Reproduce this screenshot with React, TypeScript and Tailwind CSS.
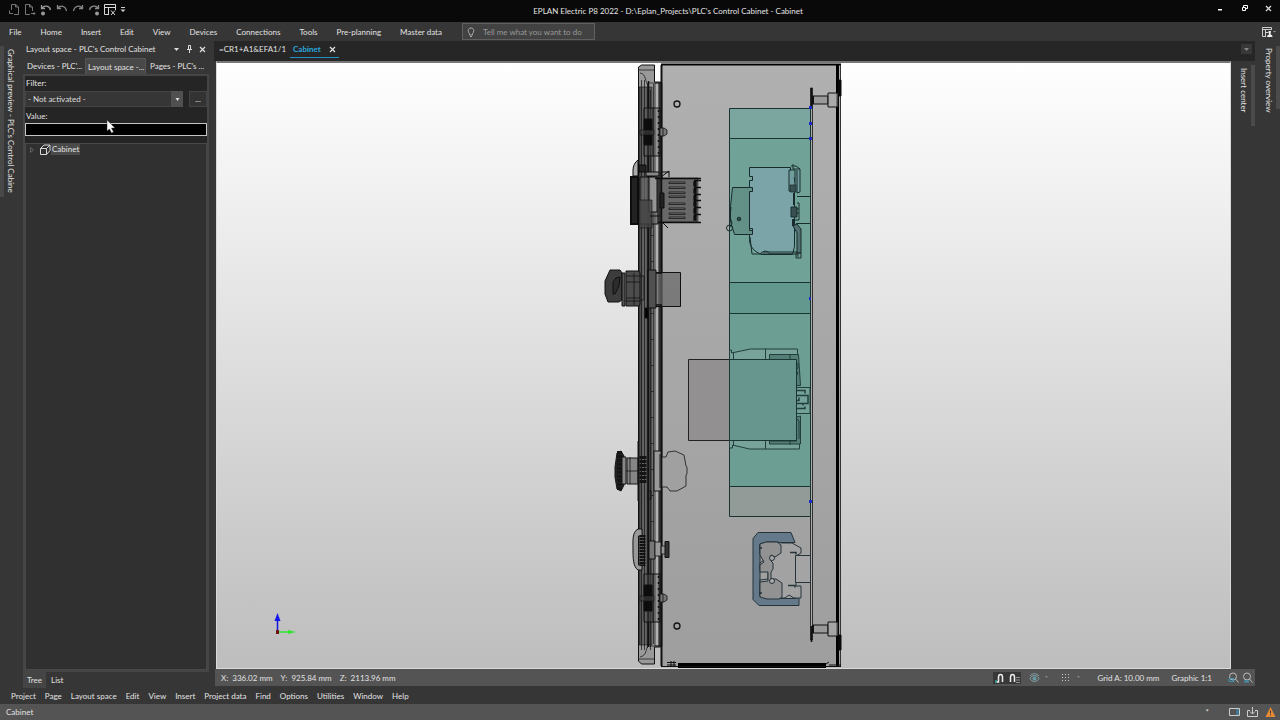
import type { ReactNode } from "react";

const ribbonTabs = [
  "File",
  "Home",
  "Insert",
  "Edit",
  "View",
  "Devices",
  "Connections",
  "Tools",
  "Pre-planning",
  "Master data",
];

const menuItems = [
  "Project",
  "Page",
  "Layout space",
  "Edit",
  "View",
  "Insert",
  "Project data",
  "Find",
  "Options",
  "Utilities",
  "Window",
  "Help",
];

function IconButton({ label, children, className = "" }: { label: string; children: ReactNode; className?: string }) {
  return (
    <button aria-label={label} className={`flex shrink-0 items-center justify-center ${className}`}>
      {children}
    </button>
  );
}

function CloseIcon() {
  return (
    <svg width="7" height="7" viewBox="0 0 7 7" stroke="#e0e0e0" strokeWidth="1.2">
      <path d="M1 1l5 5M6 1L1 6" />
    </svg>
  );
}

function TitleBar() {
  return (
    <header className="flex h-[22px] shrink-0 items-center bg-[#090909]">
      <div className="flex flex-1 items-center gap-1 pb-[2px] pl-2">
        <IconButton label="Previous page">
          <svg width="12" height="12" viewBox="0 0 12 12" fill="none" stroke="#777" strokeWidth="1">
            <path d="M3.500 6V.5h4L10.500 3v7.500H6M7.500 .5V3h3M5 9.500H1.500v-3" />
          </svg>
        </IconButton>
        <IconButton label="Next page">
          <svg width="12" height="12" viewBox="0 0 12 12" fill="none" stroke="#777" strokeWidth="1">
            <path d="M6 10.500H1.500V.5h4L8.500 3v4M5.500 .5V3h3M7 9.500h4M9.500 8L11 9.500 9.500 11" />
          </svg>
        </IconButton>
        <IconButton label="Undo list">
          <svg width="12" height="12" viewBox="0 0 12 12" fill="none" stroke="#999" strokeWidth="1.300">
            <path d="M1.500 1v3.500H5M1.800 4.300C4 1 9.500 1.500 10.500 6" />
            <circle cx="3" cy="9.500" r="2" fill="#999" stroke="none" />
          </svg>
        </IconButton>
        <IconButton label="Undo">
          <svg width="12" height="12" viewBox="0 0 12 12" fill="none" stroke="#888" strokeWidth="1.300">
            <path d="M1.500 1v3.500H5M1.800 4.300C4 1 9.500 1.500 10.500 7" />
          </svg>
        </IconButton>
        <IconButton label="Redo">
          <svg width="12" height="12" viewBox="0 0 12 12" fill="none" stroke="#888" strokeWidth="1.300">
            <path d="M10.500 1v3.500H7M10.200 4.300C8 1 2.500 1.500 1.500 7" />
          </svg>
        </IconButton>
        <IconButton label="Redo list">
          <svg width="12" height="12" viewBox="0 0 12 12" fill="none" stroke="#888" strokeWidth="1.300">
            <path d="M10.500 1v3.500H7M10.200 4.300C8 1 2.500 1.500 1.500 6" />
            <circle cx="9" cy="9.500" r="2" fill="#999" stroke="none" />
          </svg>
        </IconButton>
        <IconButton label="Workspace">
          <svg width="12" height="12" viewBox="0 0 12 12" fill="none" stroke="#d8d8d8" strokeWidth="1">
            <path d="M5 10.500H.5V.5h11V6M.5 3.500h11M4.500 3.500v7M7 6.500l4 4.500M11 6.500l-4 4.500" />
          </svg>
        </IconButton>
        <IconButton label="Customize quick access">
          <svg width="6" height="6" viewBox="0 0 6 6" fill="#ccc">
            <path d="M1 0h4v1H1zM.5 2.500h5L3 5z" />
          </svg>
        </IconButton>
      </div>
      <h1 className="ml-14 whitespace-nowrap text-center text-[#e4e4e4]">
        EPLAN Electric P8 2022 - D:\Eplan_Projects\PLC's Control Cabinet - Cabinet
      </h1>
      <div className="flex flex-1 items-center justify-end gap-4 pr-2 pb-[6px]">
        <IconButton label="Minimize">
          <svg width="8" height="8" viewBox="0 0 8 8">
            <path d="M1 5h4v1.500H1z" fill="#fff" />
          </svg>
        </IconButton>
        <IconButton label="Restore">
          <svg width="8" height="8" viewBox="0 0 8 8" fill="none" stroke="#fff" strokeWidth="1">
            <path d="M1.500 3.500h3v3h-3zM2.500 3V1.500h4v3H5" />
          </svg>
        </IconButton>
        <IconButton label="Close">
          <CloseIcon />
        </IconButton>
      </div>
    </header>
  );
}

function Ribbon() {
  return (
    <nav className="flex h-[19px] shrink-0 items-center bg-[#363636] pr-1 pl-[9px]">
      <div className="flex items-center gap-[19px] whitespace-nowrap">
        {ribbonTabs.map((t) => (
          <button key={t}>{t}</button>
        ))}
      </div>
      <label className="ml-5 flex h-[17px] w-[133px] items-center gap-2 border border-[#606060] bg-[#424242] pl-1">
        <svg width="8" height="10" viewBox="0 0 8 10" fill="none" stroke="#aaa" strokeWidth="1">
          <path d="M2.500 6.500C.5 5 .8 1 4 1s3.500 4 1.500 5.500V8h-3zM3 9.500h2" />
        </svg>
        <input
          aria-label="Tell me what you want to do"
          placeholder="Tell me what you want to do"
          className="min-w-0 flex-1 bg-transparent outline-none placeholder:text-[#999]"
        />
      </label>
      <IconButton label="Workspaces" className="ml-auto">
        <svg width="15" height="12" viewBox="0 0 15 12" fill="none" stroke="#ccc" strokeWidth="1">
          <path d="M5 10.500H1.500v-9h9V4M1.500 3.500h9M4.500 3.500v7M4.500 6.500h3" />
          <path d="M6 11c0-2 1.500-2 2-2.500L7.500 5h2.500L9.500 8.500c1 .5 2 .5 2 2.500z" fill="#eee" stroke="none" />
          <path d="M12 5h3l-1.500 1.500z" fill="#999" stroke="none" />
        </svg>
      </IconButton>
    </nav>
  );
}

function Navigator() {
  return (
    <aside className="flex w-[186px] shrink-0 flex-col">
      <div className="flex h-4 shrink-0 items-center pr-px pl-[3px]">
        <h2 className="flex-1 whitespace-nowrap">Layout space - PLC's Control Cabinet</h2>
        <div className="flex items-center gap-[6px]">
          <IconButton label="Panel menu">
            <svg width="7" height="5" viewBox="0 0 7 5">
              <path d="M1 1h5L3.500 4z" fill="#ddd" />
            </svg>
          </IconButton>
          <IconButton label="Pin">
            <svg width="7" height="8" viewBox="0 0 7 8" fill="none" stroke="#ddd" strokeWidth="1">
              <path d="M2.500 4.500v-4h2v4M1 4.500h5M3.500 5v3" />
            </svg>
          </IconButton>
          <IconButton label="Close panel" className="pr-[2px]">
            <CloseIcon />
          </IconButton>
        </div>
      </div>
      <div className="mt-px flex h-4 shrink-0 items-center whitespace-nowrap">
        <button className="h-full w-[62px] pl-1 text-left">Devices - PLC'...</button>
        <button className="h-full w-[61px] border border-b-0 border-[#555] bg-[#484848] pl-[2px] text-left">
          Layout space -...
        </button>
        <button className="h-full flex-1 pl-1 text-left">Pages - PLC's ...</button>
      </div>
      <div className="flex min-h-0 flex-1 flex-col border-2 border-[#454545] bg-[#252525]">
        <label htmlFor="filter" className="h-[15px] shrink-0 pt-px pl-px leading-[12px]">
          Filter:
        </label>
        <div className="flex h-4 shrink-0 items-stretch justify-between">
          <div className="relative flex w-[158px] bg-[#363636]">
            <select id="filter" className="w-full appearance-none border border-[#444] pl-[2px] text-[#ddd]">
              <option>- Not activated -</option>
            </select>
            <span className="pointer-events-none absolute inset-y-0 right-0 flex w-3 items-center justify-center bg-[#505050]">
              <svg width="5" height="3" viewBox="0 0 5 3">
                <path d="M.5 0h4l-2 3z" fill="#ddd" />
              </svg>
            </span>
          </div>
          <button className="w-[18px] border border-[#444] bg-[#333] leading-none">...</button>
        </div>
        <label htmlFor="value" className="h-4 shrink-0 pt-[3px] pl-px leading-[12px]">
          Value:
        </label>
        <input id="value" className="h-[13px] w-full shrink-0 border border-[#c4c4c4] bg-black outline-none" />
        <div className="mt-[7px] min-h-0 flex-1 border border-[#484848] bg-[#303030]">
          <ul>
            <li className="flex h-[11px] items-center">
              <svg width="10" height="8" viewBox="0 0 10 8" fill="none" stroke="#606060">
                <path d="M4.500 1.500v5L7.500 4z" />
              </svg>
              <svg className="ml-[3px]" width="12" height="12" viewBox="0 0 12 12" fill="none" stroke="#d8d8d8">
                <path d="M1.500 4.500h6v6h-6zM1.500 4.500l3.500-3.500h6L7.500 4.500M11 1v5.500l-3.500 4" />
              </svg>
              <button className="h-full bg-[#4b4b4b] px-px leading-[11px]">Cabinet</button>
            </li>
          </ul>
        </div>
      </div>
      <div className="flex h-4 shrink-0 items-stretch">
        <button className="bg-[#454545] px-1">Tree</button>
        <button className="px-[5px]">List</button>
      </div>
    </aside>
  );
}

// Vents of the rear housing behind the door meter
const ventRows = [182, 187, 192, 196, 203, 208, 213, 217];
const terminalRows = [182, 189, 196, 202, 209, 216];

function Hinge({ y }: { y: number }) {
  return (
    <g>
      <path d={`M644 ${y - 24}h16v48h-16zM653 ${y - 24}v48`} fill="#555" fillOpacity=".35" />
      <path d={`M644 ${y - 13}h8v26h-8z`} fill="#0c0c0c" />
      <path d={`M640 ${y - 2}h14v5h-14z`} fill="#444" fillOpacity=".6" strokeWidth=".6" />
      <path d={`M660 ${y - 4}h4l3 2v4l-3 2h-4zM663 ${y - 4}v8`} fill="#777" strokeWidth=".8" />
      <path d={`M658.500 ${y - 22}v45`} strokeDasharray="2 4" strokeWidth="1.500" />
    </g>
  );
}

function MountBolt({ y }: { y: number }) {
  return (
    <g>
      <path d={`M813 ${y - 4}h15v8h-15z`} fill="#999" />
      <path d={`M828 ${y - 7}h10v14h-10z`} fill="#aaa" fillOpacity=".7" />
      <path d={`M813 ${y - 4}v8`} strokeWidth="2" />
    </g>
  );
}

function CabinetView() {
  return (
    <svg viewBox="217 63 1013 605" className="block h-full w-full" role="img" aria-label="Cabinet side view">
      <defs>
        <linearGradient id="body" x1="0" y1="0" x2="0" y2="1">
          <stop offset="0" stopColor="#b0b0b0" />
          <stop offset="1" stopColor="#9e9e9e" />
        </linearGradient>
        <linearGradient id="door" x1="0" y1="0" x2="1" y2="0">
          <stop offset="0" stopColor="#444" />
          <stop offset=".45" stopColor="#6c6c6c" />
          <stop offset=".7" stopColor="#444" />
          <stop offset="1" stopColor="#666" />
        </linearGradient>
      </defs>

      {/* enclosure */}
      <path d="M661 65h179v601H661z" fill="url(#body)" />
      <g fill="none" stroke="#111" strokeWidth="1">
        <path d="M661 64.500h180" strokeWidth="2" stroke="#000" />
        <path d="M837.500 65v601" strokeWidth="3" stroke="#000" />
        <path d="M840.500 65v601" stroke="#333" />
        <path d="M839 80h2v16h-2zM839 635h2v15h-2z" fill="#000" />
        <path d="M678 665.500h148" strokeWidth="5" stroke="#000" />
        <path d="M661 666.500h180M667 662.500h9M667 665h9M671 661v6M674 661v6M826 664l3-2M829 665h12" />
        <path d="M810.500 88h2v552h-2z" fill="#aaa" strokeWidth=".8" />
        <path d="M811.500 88v20M811.500 626v16" strokeWidth="1.500" />
        <circle cx="677" cy="104" r="3" strokeWidth="1.300" />
        <circle cx="677" cy="626" r="3" strokeWidth="1.300" />
        <MountBolt y={100} />
        <MountBolt y={629} />
      </g>

      {/* cable ducts and rail area */}
      <g stroke="#1b3330" strokeWidth="1" fill="#70a298">
        <path d="M729.500 138.500h81v144h-81z" />
        <path d="M729.500 108.500h81v30h-81z" fill="#7ba69f" />
        <path d="M729.500 282.500h81v31h-81z" fill="#62988e" />
        <path d="M729.500 313.500h81v173h-81z" fill="#6d9e94" />
        <path d="M729.500 486.500h81v30h-81z" fill="#929b98" />
      </g>

      {/* upper device */}
      <g fill="none" stroke="#182c2d" strokeWidth="1">
        <path
          d="M749.500 167.500h41v7l4 4v68l-2 8h-30c-8-2-13-8-13-15v-7h3v-4h-3v-48h3v-4h-3z"
          fill="#7ba4a8"
        />
        <path d="M749.500 187.500h-17l-2 19v15l4 13h18v-4h-3v-39h3v-4z" fill="#639188" />
        <path d="M750 237l2 17h40M763 252h35M761 253c4-3 7-2 9 1h28v3" />
        <circle cx="739" cy="219" r="1.800" fill="#314f47" />
        <circle cx="729.500" cy="228" r="3" />
        <path d="M731 207l-1 10 2 6-2 4" />
        <path d="M789 170v21h6v-21zM791 166h5l4 3v23l-3 1M793 164v5h7M797 170v23" fill="#719da0" />
        <path d="M790 185h6v7h-6z" fill="#395052" strokeWidth=".7" />
        <path d="M794 194v9M797 224l4 5v24h-4v-20l-4-7z" fill="#526f71" />
        <path d="M791 207h6v10h-6z" fill="#395052" />
        <path d="M797 203h2v17h-4M799 209h-3M799 213h-3" />
        <path d="M797 196.500h13M796 223.500h14" />
        <path d="M794 193v12M793 219v7" strokeWidth="2" />
        <path d="M796 253h5v5h-5z" />
      </g>

      {/* lower device */}
      <g fill="none" stroke="#213f3b" strokeWidth="1">
        <path d="M729.500 360v-10h2v3l19-4h47v12" fill="#77a39b" />
        <path d="M729.500 440v8h3v-3l17 4h50v-20h-3" fill="#78a39a" />
        <path d="M765.500 349v11M765.500 441v8M733.500 353v7M733.500 441v4" />
        <path d="M769.500 354.500h29l2 31h-4v-25h-27zM769.500 441h27v-24l4-1v28h-31z" fill="#547e77" />
        <path d="M790 354v6M790 441v4M796 362l2 2v4l-2 2 2 3-2 3M796 418l3 3v18" />
        <path d="M796 387.500h14v26h-13" fill="#74a199" />
        <path d="M688.500 359.500h41v81h-41z" fill="#929090" stroke="#222" />
        <path d="M729.500 359.500h67v81h-67z" fill="#67968e" stroke="#193632" />
        <path
          d="M797 390.500h8v3M797 395.500h5M802 395.500h6v8h-5M797 400.500h2v-3M797 403.500h6v2M797 408.500h8v-2"
          strokeWidth="1.500"
        />
      </g>

      {/* terminal block */}
      <g stroke="#26343a" strokeWidth="1">
        <path d="M758 532.500h33l4 10h-27l-8 2v52l8 2h28v-3h3v10h-40l-6-6v-61z" fill="#64798a" />
        <path
          d="M760 544l7-2h10l5 1h10l9 5v5l-5 3v30h5v12h-7l-5-3-4 3h-18l-7-2v-16l8-1v-9h-8v-7l4-3-4-7z"
          fill="#a2a2a2"
        />
        <path
          d="M760 544l6-2h11l4 3v8l-6 4-4-2v6l2 2v6l-2 3v7h5l6 4v14l-3 2h-12l-7-2v-15l8-1v-9h-8v-7l4-3-4-7z"
          fill="#929292"
        />
        <circle cx="772" cy="558" r="2.500" fill="#aaa" />
        <circle cx="772" cy="581" r="2.500" fill="#aaa" />
        <path d="M795.500 555.500h15v27h-15z" fill="#a4a4a4" />
        <path d="M790 552.500h6v2M788 585.500h7v2M759 548h3M759 593h3" fill="none" strokeWidth="1.500" />
      </g>

      {/* door profile */}
      <g stroke="#111" strokeWidth="1">
        <path d="M638.500 67l3-2h13v17h6v565h-6v17h-13l-3-3z" fill="#999" />
        <path d="M639 87h13v558h-13z" fill="url(#door)" strokeWidth=".6" />
        <path d="M655 83h4v563h-4z" fill="#b0b0b0" strokeWidth=".7" />
        <path d="M659 83h3v563h-3z" fill="#3c3c3c" strokeWidth=".5" />
        <path d="M641.500 80v570M644.500 80v570M647.500 83v565M650.500 90v560M653.500 84v560" fill="none" strokeWidth=".7" />
        <path d="M648.500 81v566" strokeWidth="1.500" />
        <path d="M661.500 65v601" strokeWidth="2" />
        <path
          d="M648 83h13M648 646h13M638 70h17M638 659h17M640 73c7 1 4 9 9 13M640 657c8-2 5-9 9-13"
          fill="none"
          strokeWidth=".7"
        />
        <path d="M652.500 235v290" stroke="#222" strokeDasharray="1 25" strokeWidth="2" />
        <Hinge y={132} />
        <Hinge y={598} />
      </g>

      {/* door meter */}
      <g stroke="#0d0d0d" strokeWidth="1">
        <path d="M633 176v-6c0-4 2-8 5-10v16z" fill="#aaa" />
        <path d="M631 177h7v47h-7z" fill="#222" strokeWidth="2" />
        <path d="M640 177h18v47h-18z" fill="#666" fillOpacity=".7" />
        <path d="M649 177h8v35h-8z" fill="#aaa" fillOpacity=".7" />
        <path d="M639 200h13v28h-13z" fill="#444" fillOpacity=".8" strokeWidth=".6" />
        <path d="M662 178h36v44h-36z" fill="#686868" strokeWidth=".5" />
        <path d="M655 178.500h46M658 222.500h43" strokeWidth="1.500" />
        <path d="M639 165h7v7h-7zM660 193h4v15h-4z" fill="#222" />
        <path d="M646 172h13v4h-13z" fill="#888" />
        <path d="M661 177l8-6v6M661 172h8M663 223l5 5M650 216h10" fill="none" />
        {ventRows.map((y) => (
          <path key={y} d={`M669 ${y}h16v1.500h-16z`} fill="#777" strokeWidth=".7" />
        ))}
        {terminalRows.map((y) => (
          <path key={y} d={`M694 ${y - 1.5}h7M694 ${y}h2v4h-2z`} fill="#111" strokeWidth="1.300" />
        ))}
      </g>

      {/* selector switch */}
      <g stroke="#111" strokeWidth="1">
        <path d="M648.500 272.500h32v34h-32z" fill="#666" fillOpacity=".7" />
        <path d="M610 270h10l2 3v27l-3 2h-11l-3-8v-13z" fill="#3c3c3c" />
        <path d="M620 277l-4 1-3 4v12h2l4-8z" fill="#2c2c2c" />
        <path d="M622 273h3v33h-3z" fill="#555" />
        <path d="M626 271h13l1 2v31l-1 2h-13z" fill="#4c4c4c" />
        <path
          d="M626 276h14M626 282h14M626 298h14M625 301h15M640 276h4v24h-4M634 273v32M655 271v37"
          fill="none"
          strokeWidth=".8"
        />
        <path d="M648 270h8v38h-8z" fill="#505050" />
        <path d="M648 270v46M656 273h6M656 305h6" strokeWidth="1.500" />
        <path d="M645 308h3v10h-3z" />
      </g>

      {/* emergency stop */}
      <g stroke="#151515" strokeWidth="1">
        <path d="M615 467l2-14 4-2 3 5v29l-3 6-4-2-2-12z" fill="#222" />
        <path d="M619.500 451v40" strokeWidth="5" strokeDasharray="3 1" />
        <path d="M622 457h4v27h-4z" fill="#888" />
        <path d="M627 458h11v26h-11z" fill="#858585" />
        <path d="M630 457v27M626 471h12" strokeWidth=".8" />
        <path d="M643 456v28" strokeWidth="7" strokeDasharray="3 1" />
        <path d="M654 451h7v40h-7z" fill="#999" />
        <path
          d="M662 457h4l2-5 7-1 9 4 2 11 1 1v7l-1 1v11l-9 5h-7l-3-4h-5z"
          fill="#a0a0a0"
          strokeWidth=".8"
        />
        <path d="M638 441v60M660 454v34" />
        <path d="M648 491h3v8h-3z" fill="none" />
      </g>

      {/* lower push button */}
      <g stroke="#111" strokeWidth="1">
        <path d="M638 529c-6 3-5 12-5 20s0 18 5 21h4v-41z" fill="#999" />
        <path d="M638.500 536h6v29h-6z" fill="#555" />
        <path d="M642.500 535v31" strokeWidth="6" strokeDasharray="2 1" />
        <path d="M649 541h6v18h-6z" fill="#777" />
        <path d="M655 542h6v14h-6zM661 546h5v8h-5z" fill="#999" strokeWidth=".8" />
        <path d="M665 541.500h4v16h-4z" fill="#333" />
      </g>

      <path
        d="M809 106h3v3h-3zM809 122h3v3h-3zM809 137h3v3h-3zM809 297h2v3h-2zM809 500h3v3h-3z"
        fill="#1b29c8"
      />

      {/* axis marker */}
      <path d="M277.500 631v-12" stroke="#1515dd" strokeWidth="1.500" />
      <path d="M277.500 613l-3 8h6z" fill="#1515ee" />
      <path d="M278 632h12" stroke="#31e52c" strokeWidth="1.500" />
      <path d="M296 632l-8-2v4z" fill="#31e52c" />
      <path d="M276 630h3v4h-3z" fill="#701414" />
    </svg>
  );
}

function StatusRow() {
  return (
    <div className="mr-[-24px] mb-[2px] flex h-[17px] shrink-0 items-center justify-between bg-[#545454] pr-[2px] pl-[6px] whitespace-nowrap">
      <div className="flex gap-2">
        <span>X:&nbsp; 336.02 mm</span>
        <span>Y:&nbsp; 925.84 mm</span>
        <span>Z:&nbsp; 2113.96 mm</span>
      </div>
      <div className="flex items-center">
        <IconButton label="Snap" className="h-3 w-[14px] bg-[#383838]">
          <svg width="10" height="10" viewBox="0 0 10 10" fill="none" stroke="#eee" strokeWidth="1.500">
            <path d="M1.500 9h2V4c0-3.500 4-3.500 4 0v5" />
            <path d="M1 7v3" stroke="#39a9a4" />
          </svg>
        </IconButton>
        <IconButton label="Snap to grid" className="h-3 w-[14px] bg-[#383838]">
          <svg width="11" height="10" viewBox="0 0 11 10" fill="none" stroke="#eee" strokeWidth="1.500">
            <path d="M1.500 9V4c0-3.500 4-3.500 4 0v5" />
            <path d="M8 4v6M10 4v6" strokeDasharray="1 1.500" strokeWidth="1" />
          </svg>
        </IconButton>
        <IconButton label="Visibility" className="ml-2 gap-1">
          <svg width="11" height="10" viewBox="0 0 11 10" fill="none" stroke="#87a9b1">
            <path d="M1 5.500c2-4 7-4 9 0-2 4-7 4-9 0zM1 3c2-3 7-3 9 0" strokeWidth=".9" />
            <circle cx="5.500" cy="5.500" r="1.500" fill="#4796ae" />
          </svg>
          <svg width="5" height="3" viewBox="0 0 5 3">
            <path d="M1 0h3L2.500 2z" fill="#888" />
          </svg>
        </IconButton>
        <IconButton label="Grid" className="ml-3 gap-[6px]">
          <svg width="9" height="9" viewBox="0 0 9 9" stroke="#c5c5c5" strokeDasharray="1 2">
            <path d="M1 1.500h8M1 4.500h8M1 7.500h8" />
          </svg>
          <svg width="5" height="3" viewBox="0 0 5 3">
            <path d="M1 0h3L2.500 2z" fill="#888" />
          </svg>
        </IconButton>
        <span className="ml-4">Grid A: 10.00 mm</span>
        <span className="ml-3">Graphic 1:1</span>
        <IconButton label="Zoom window" className="ml-4">
          <svg width="11" height="11" viewBox="0 0 11 11" fill="none" stroke="#bbb">
            <circle cx="5" cy="4.500" r="3.500" />
            <path d="M7.500 7l3 3.500" />
            <path d="M1 6.500h5v3H1z" stroke="#3f91ad" />
          </svg>
        </IconButton>
        <IconButton label="Zoom entire page" className="ml-[3px]">
          <svg width="11" height="11" viewBox="0 0 11 11" fill="none" stroke="#bbb">
            <circle cx="5" cy="4.500" r="3.500" />
            <path d="M7.500 7l3 3.500" />
            <path d="M2 9.500h5" stroke="#3f91ad" strokeWidth="2" />
          </svg>
        </IconButton>
      </div>
    </div>
  );
}

export default function App() {
  return (
    <div className="relative flex h-screen flex-col overflow-hidden bg-[#363636] font-['Lato','Open_Sans',sans-serif] text-[8px] leading-[12px] text-[#e2e2e2]">
      <TitleBar />
      <Ribbon />
      <div className="flex min-h-0 flex-1">
        <div className="flex w-[23px] shrink-0 items-start pt-[5px]">
          <span className="h-[151px] w-1 bg-[#484848]" />
          <button className="pt-[3px] pl-px text-left whitespace-nowrap [writing-mode:vertical-rl]">
            Graphical preview - PLC's Control Cabine
          </button>
        </div>
        <Navigator />
        <main className="ml-[5px] flex min-w-0 flex-1">
          <div className="flex min-w-0 flex-1 flex-col">
            <div className="flex h-5 shrink-0 items-start justify-between bg-[#262626] pr-[3px] pl-[5px]">
              <div className="flex whitespace-nowrap">
                <button className="h-4">=CR1+A1&amp;EFA1/1</button>
                <div className="ml-1 flex h-[17px] items-center gap-2 border-b border-[#2590c4] px-[3px]">
                  <button className="font-bold text-[#2aa7df]">Cabinet</button>
                  <IconButton label="Close tab">
                    <CloseIcon />
                  </IconButton>
                </div>
              </div>
              <IconButton label="Tab list" className="mt-[3px] h-[10px] w-[11px] bg-[#383838]">
                <svg width="7" height="5" viewBox="0 0 7 5">
                  <path d="M1 1h5L3.500 4z" fill="#888" />
                </svg>
              </IconButton>
            </div>
            <div className="flex min-h-0 flex-1">
              <div className="flex min-w-0 flex-1 flex-col pl-px">
                <div className="ml-px min-h-0 flex-1 border border-t-2 border-[#d9d9d9] border-t-[#777] bg-linear-to-b from-white to-[#bdbdbd]">
                  <CabinetView />
                </div>
                <StatusRow />
              </div>
              <div className="flex w-[24px] shrink-0 items-start justify-end pt-1">
                <button className="pt-[3px] whitespace-nowrap [writing-mode:vertical-rl]">Insert center</button>
                <span className="ml-px h-[61px] w-1 bg-[#4b4b4b]" />
              </div>
            </div>
          </div>
          <div className="flex w-[25px] shrink-0 items-start justify-end pt-[5px]">
            <button className="pt-[2px] whitespace-nowrap [writing-mode:vertical-rl]">Property overview</button>
            <span className="ml-px h-[63px] w-1 bg-[#4b4b4b]" />
          </div>
        </main>
      </div>
      <nav className="flex h-4 shrink-0 items-center gap-[9px] pl-[11px] whitespace-nowrap">
        {menuItems.map((m) => (
          <button key={m}>{m}</button>
        ))}
      </nav>
      <footer className="flex h-4 shrink-0 items-center bg-[#545454] pr-1 pl-[6px]">
        <span className="flex-1">Cabinet</span>
        <span className="mr-5">*</span>
        <div className="flex items-center gap-[6px]">
          <svg width="12" height="10" viewBox="0 0 12 10" fill="none" stroke="#ccc">
            <path d="M.5 1.500h10v7H.5z" />
            <path d="M8.500 2v6" stroke="#3988a4" strokeWidth="2" />
          </svg>
          <svg width="12" height="11" viewBox="0 0 12 11" fill="none" stroke="#ccc">
            <path d="M3 3.500H.5v6h10v-6H8M5.500 0v7M3 4.500L5.500 7 8 4.500" />
          </svg>
          <svg width="11" height="10" viewBox="0 0 11 10">
            <path d="M5.500 0l5 10h-10z" fill="#e78b35" />
            <path d="M5.500 3.500v3M5.500 7.500v1" stroke="#333" />
          </svg>
        </div>
      </footer>
      {/* mouse pointer */}
      <svg className="pointer-events-none absolute top-[120px] left-[106px]" width="10" height="14" viewBox="0 0 10 14">
        <path d="M1 0v11l2.500-2 2 4 2-1-2-4H9z" fill="#fff" stroke="#333" strokeWidth=".5" />
      </svg>
    </div>
  );
}
